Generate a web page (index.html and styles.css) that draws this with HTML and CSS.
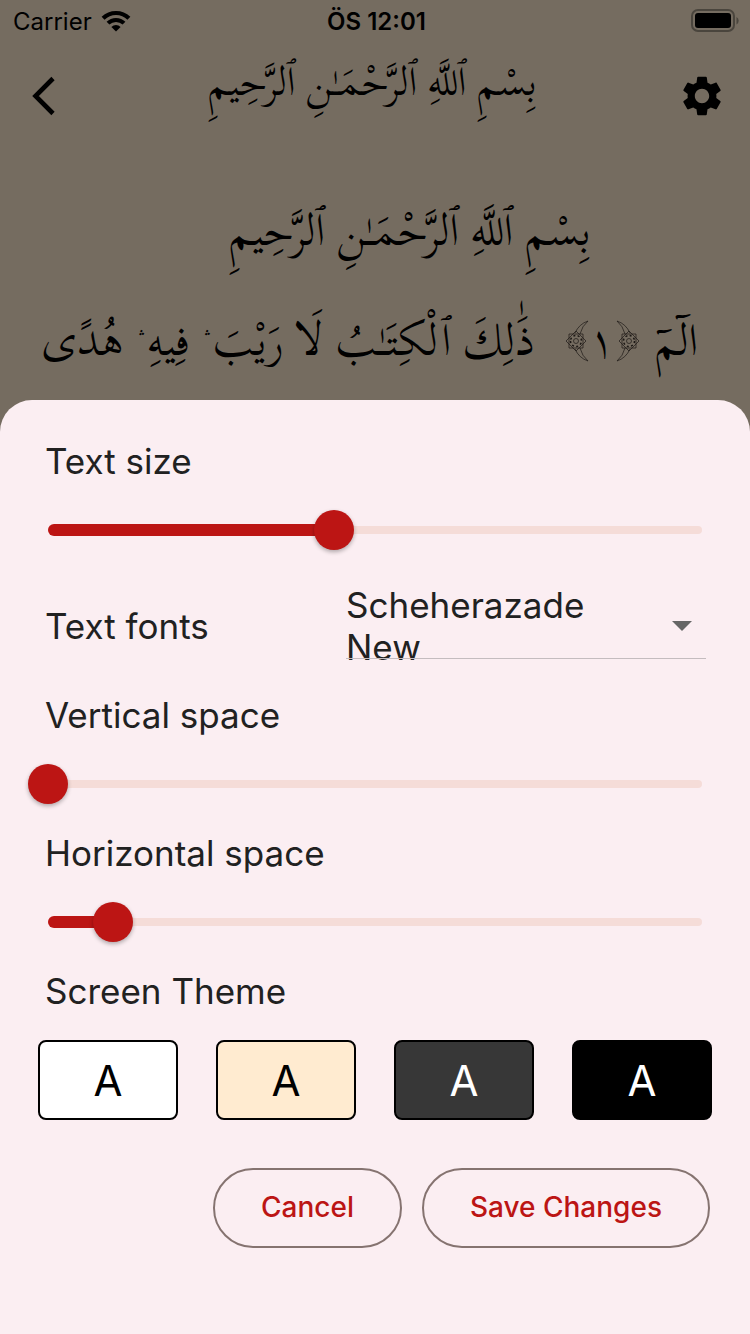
FILE: index.html
```html
<!DOCTYPE html>
<html lang="en">
<head>
<meta charset="utf-8">
<meta name="viewport" content="width=device-width, initial-scale=1">
<title>Reader settings</title>
<link rel="stylesheet" href="styles.css">
</head>
<body>
<div class="status">
  <div class="status-side status-start">
    <span>Carrier</span>
    <svg class="wifi" viewBox="0 0 30 22" aria-hidden="true">
      <path d="M2.1 8.3a18.300 18.300 0 0 1 25.800 0" fill="none" stroke="#000" stroke-width="4.200"/>
      <path d="M7 13.200a11.300 11.300 0 0 1 16 0" fill="none" stroke="#000" stroke-width="4"/>
      <path d="M15 21.500l-4.600-4.500a6.500 6.500 0 0 1 9.200 0z"/>
    </svg>
  </div>
  <div class="status-time">ÖS 12:01</div>
  <div class="status-side status-end">
    <svg class="battery" viewBox="0 0 50 24" aria-hidden="true">
      <rect x="2" y="1" width="42" height="21" rx="6" fill="none" stroke="#4a453d" stroke-width="2"/>
      <rect x="5" y="4" width="36" height="15" rx="3"/>
      <path d="M46.500 8v7.500q2.200-1 2.200-3.750t-2.200-3.750z" fill="#4a453d"/>
    </svg>
  </div>
</div>
<header class="bar">
  <button class="icon-button" type="button" aria-label="Back">
    <svg viewBox="0 0 40 40" aria-hidden="true"><path d="M30 2.500L12.500 20 30 37.500" fill="none" stroke="#000" stroke-width="4.600"/></svg>
  </button>
  <h1 class="bar-title" lang="ar" dir="rtl">بِسْمِ ٱللَّهِ ٱلرَّحْمَـٰنِ ٱلرَّحِيمِ</h1>
  <button class="icon-button" type="button" aria-label="Settings">
    <svg viewBox="2 2 20 20" aria-hidden="true"><path d="M19.140 12.940c.04-.3.06-.61.06-.94 0-.32-.02-.64-.07-.94l2.030-1.580c.18-.14.23-.41.12-.61l-1.920-3.320c-.12-.22-.37-.29-.59-.22l-2.390.96c-.5-.38-1.030-.7-1.620-.94l-.36-2.540c-.04-.24-.24-.41-.48-.41h-3.840c-.24 0-.43.17-.47.41l-.36 2.540c-.59.24-1.130.57-1.620.94l-2.390-.96c-.22-.08-.47 0-.59.22L2.740 8.870c-.12.21-.08.47.12.61l2.030 1.580c-.05.3-.09.63-.09.94s.02.64.07.94l-2.030 1.580c-.18.14-.23.41-.12.61l1.920 3.320c.12.22.37.29.59.22l2.390-.96c.5.38 1.030.7 1.620.94l.36 2.540c.05.24.24.41.48.41h3.840c.24 0 .44-.17.47-.41l.36-2.540c.59-.24 1.130-.56 1.620-.94l2.390.96c.22.08.47 0 .59-.22l1.920-3.320c.12-.22.07-.47-.12-.61l-2.010-1.580zM12 15.600c-1.980 0-3.600-1.620-3.600-3.600s1.620-3.600 3.600-3.600 3.600 1.620 3.600 3.600-1.620 3.600-3.600 3.600z"/></svg>
  </button>
</header>
<main class="reader" lang="ar" dir="rtl">
  <p class="basmala">بِسْمِ ٱللَّهِ ٱلرَّحْمَـٰنِ ٱلرَّحِيمِ</p>
  <p class="verse">
    <span class="opening">
      <span>الٓمٓ</span>
      <span class="number">
        <svg class="ornament" viewBox="0 0 24 42" aria-hidden="true"><use href="#ornament"/></svg>
        <span>١</span>
        <svg class="ornament flip" viewBox="0 0 24 42" aria-hidden="true"><use href="#ornament"/></svg>
      </span>
    </span>
    <span>ذَٰلِكَ ٱلْكِتَـٰبُ لَا رَيْبَ ۛ فِيهِ ۛ هُدًى</span>
  </p>
  <svg class="defs" aria-hidden="true">
    <g id="ornament" fill="none" stroke="#1c1815" stroke-width=".7">
      <path d="M1 1Q10 4 14 13M1 1Q7 6 9 14M1 41Q10 38 14 29M1 41Q7 36 9 28"/>
      <path d="M6 14h14v14H6zM13 11l10 10-10 10L3 21z"/>
      <circle cx="13" cy="21" r="5.500" stroke-width="1.500" stroke-dasharray="2 2.320"/>
      <circle cx="13" cy="21" r="2.500"/>
    </g>
  </svg>
</main>
<form class="sheet">
  <div class="field">
    <label class="label" for="size">Text size</label>
    <div class="slider" style="--value: .437">
      <span class="rail"></span><span class="fill"></span>
      <input id="size" type="range" min="0" max="1000" value="437">
    </div>
  </div>
  <div class="font-row">
    <label class="label" for="font">Text fonts</label>
    <div class="dropdown">
      <select id="font"><option>Scheherazade New</option></select>
      <svg class="caret" viewBox="0 0 20 10" aria-hidden="true"><path d="M0 0h20L10 10z" fill="#666"/></svg>
    </div>
  </div>
  <div class="field">
    <label class="label" for="vertical">Vertical space</label>
    <div class="slider" style="--value: 0">
      <span class="rail"></span>
      <input id="vertical" type="range" min="0" max="1000" value="0">
    </div>
  </div>
  <div class="field">
    <label class="label" for="horizontal">Horizontal space</label>
    <div class="slider" style="--value: .1">
      <span class="rail"></span><span class="fill"></span>
      <input id="horizontal" type="range" min="0" max="1000" value="100">
    </div>
  </div>
  <div class="field">
    <div class="label" id="theme">Screen Theme</div>
    <div class="themes" role="group" aria-labelledby="theme">
      <button class="theme theme-white" type="button">A</button>
      <button class="theme theme-sepia" type="button">A</button>
      <button class="theme theme-gray" type="button">A</button>
      <button class="theme theme-black" type="button">A</button>
    </div>
  </div>
  <div class="actions">
    <button class="action" type="button">Cancel</button>
    <button class="action" type="submit">Save Changes</button>
  </div>
</form>
</body>
</html>
```
FILE: styles.css
```css
* { box-sizing: border-box; }
body {
  margin: 0;
  min-height: 100vh;
  display: flex;
  flex-direction: column;
  background: #756c60;
  color: #000;
  font-family: Inter, "Liberation Sans", sans-serif;
}
button { font: inherit; cursor: pointer; }
h1, p { margin: 0; font-weight: 400; }

.status {
  display: flex;
  align-items: center;
  height: 42px;
  padding: 0 10px;
  font-size: 24px;
}
.status-side { flex: 1; display: flex; align-items: center; gap: 9px; }
.status-start { padding-left: 3px; }
.status-end { justify-content: flex-end; }
.status-time { font-weight: 600; }
.wifi { width: 30px; height: 22px; }
.battery { width: 50px; height: 24px; }

.bar {
  display: flex;
  align-items: center;
  justify-content: space-between;
  height: 108px;
  padding: 0 28px 0 23px;
}
.icon-button {
  display: flex;
  padding: 0;
  border: 0;
  background: none;
}
.icon-button svg { width: 40px; height: 40px; }
.bar-title, .reader { font-family: "Scheherazade New", Amiri, "Noto Naskh Arabic", "DejaVu Sans", serif; }
.bar-title { align-self: flex-start; font-size: 40px; line-height: 80px; white-space: nowrap; }

.reader { padding: 26px 52px 4px 42px; font-size: 44px; line-height: 110px; white-space: nowrap; }
.basmala { padding-left: 80px; text-align: center; }
.verse { display: flex; align-items: center; justify-content: space-between; }
.opening { display: flex; align-items: center; gap: 15px; }
.number { display: flex; align-items: center; gap: 1px; }
.ornament { width: 24px; height: 42px; }
.flip { transform: scaleX(-1); }
.defs { display: block; width: 0; height: 0; }

.sheet {
  flex: 1;
  padding: 40px 28px 86px;
  display: flex;
  flex-direction: column;
  border-radius: 32px 32px 0 0;
  background: #fbeef2;
  color: #212121;
}
.field { display: flex; flex-direction: column; gap: 28px; margin-bottom: 28px; }
.label { padding-left: 17px; font-size: 35px; line-height: 42px; }

.slider { display: grid; align-items: center; }
.slider > * { grid-area: 1 / 1; }
.rail { height: 8px; margin: 0 20px; border-radius: 4px; background: #f5dcd8; }
.fill { width: calc((100% - 40px) * var(--value)); height: 12px; margin-left: 20px; border-radius: 6px; background: #bc1514; }
.slider input {
  appearance: none;
  width: 100%;
  height: 40px;
  margin: 0;
  background: none;
}
.slider input::-webkit-slider-thumb {
  appearance: none;
  width: 40px;
  height: 40px;
  border-radius: 50%;
  background: #bc1514;
  box-shadow: 0 2px 4px rgba(0, 0, 0, .3);
}

.font-row {
  display: grid;
  grid-template-columns: 318px 1fr;
  align-items: center;
  margin: 6px 16px 26px 0;
}
.dropdown { position: relative; display: flex; align-items: center; }
.dropdown::after {
  content: "";
  position: absolute;
  inset: auto 0 9px;
  height: 1px;
  background: #c4bcbf;
}
.dropdown select {
  appearance: none;
  width: 100%;
  height: 84px;
  padding: 0 80px 0 0;
  border: 0;
  background: none;
  color: inherit;
  font: 35px/42px Inter, "Liberation Sans", sans-serif;
  white-space: normal;
}
.caret { position: absolute; right: 14px; width: 20px; height: 10px; pointer-events: none; }

.themes { display: grid; grid-template-columns: repeat(4, 1fr); gap: 38px; padding: 0 10px; }
.theme {
  height: 80px;
  padding: 0;
  border: 2px solid #000;
  border-radius: 8px;
  font-size: 42px;
}
.theme-white { background: #fff; color: #000; }
.theme-sepia { background: #ffebd0; color: #000; }
.theme-gray { background: #373737; color: #fff; }
.theme-black { background: #000; color: #fff; }

.actions { display: flex; justify-content: flex-end; gap: 20px; padding: 20px 12px 0; }
.action {
  height: 80px;
  padding: 0 46px 2px;
  border: 2px solid #857370;
  border-radius: 40px;
  background: none;
  color: #bc1514;
  font-size: 28px;
  font-weight: 500;
}
```
